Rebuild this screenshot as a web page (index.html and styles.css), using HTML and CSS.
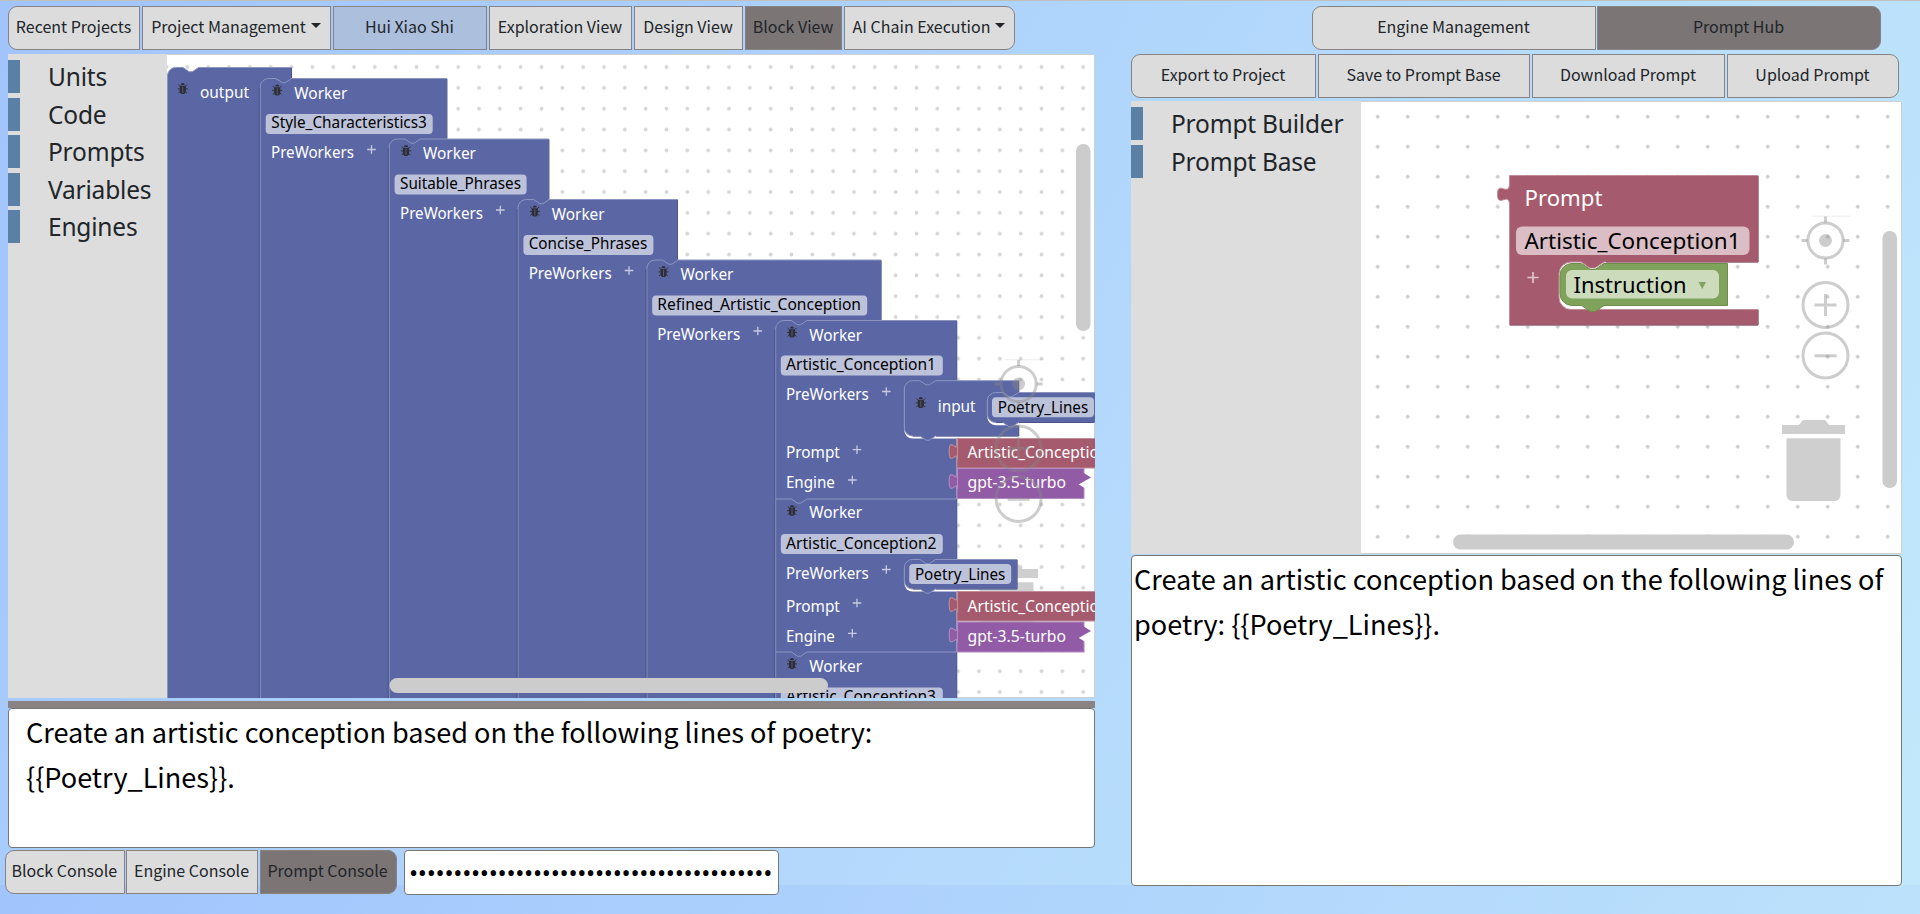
FILE: index.html
```html
<!DOCTYPE html>
<html lang="en">
<head>
<meta charset="utf-8">
<title>Prompt Hub</title>
<link rel="stylesheet" href="styles.css">
</head>
<body>
<svg class="defs" width="0" height="0" aria-hidden="true">
  <defs>
    <pattern id="dots" width="20.833" height="20.833" patternUnits="userSpaceOnUse" x="156.08" y="56.6">
      <circle cx="10.42" cy="10.42" r="1.9" fill="#d6d6d6"/>
    </pattern>
    <pattern id="crosses" width="30" height="30" patternUnits="userSpaceOnUse" x="1362.7" y="101.7">
      <path d="M13 15h4M15 13v4" stroke="#c6c6c6" stroke-width="1.4"/>
    </pattern>
    <symbol id="bug" viewBox="0 0 10 12" overflow="visible">
      <path d="M3 2.6a2 2 0 0 1 4 0zM1.900 3.200h6.200v5.200a3.100 3.100 0 0 1-6.200 0z" fill="#2f2f33"/>
      <path d="M2 3.400.6 2M8 3.400 9.400 2M2 6.400H0M8 6.400h2M2.200 9 .7 10.600M7.800 9l1.500 1.600" stroke="#2f2f33" fill="none"/>
      <path d="M5 4.200v6.400" stroke="#5b67a5" stroke-width=".7"/>
    </symbol>
    <symbol id="plus" viewBox="0 0 10 10" overflow="visible">
      <path d="M0.700 5h8.600M5 .7v8.600" stroke="#fff" stroke-opacity=".65" stroke-width="1.300"/>
    </symbol>
    <g id="puzzle"><path d="M.5 0v5c0 10-8-8-8 7.500s8-2.500 8 7.500z"/></g>
    <g id="controls" fill="none" stroke="#888" stroke-opacity=".42" stroke-width="3">
      <circle cx="0" cy="0" r="17.600"/>
      <circle cx="0" cy="0" r="6.500" fill="#888" fill-opacity=".42" stroke="none"/>
      <path d="M0-24v6M0 18v6M-24 0h6M18 0h6"/>
      <path d="M-13-24.300h38" stroke-width="1" stroke-opacity=".15"/>
      <circle cx="0" cy="64.500" r="22.500"/>
      <path d="M-11 64.500h22M0 53.500v22"/>
      <circle cx="0" cy="115" r="22.500"/>
      <path d="M-11 115.300h22"/>
    </g>
    <g id="trash" fill="#cfcfcf">
      <path d="M0 5h17l4-5h22l4 5h16v9H0z"/>
      <path d="M4.500 18.300h54v56q0 6.700-6 6.700h-42q-6 0-6-6.700z"/>
    </g>
  </defs>
</svg>

<div class="app">
  <section class="left">
    <nav class="bar tabs">
      <button class="btn first" style="width:132px"><span>Recent Projects</span></button>
      <button class="btn" style="width:189px"><span>Project Management</span><i class="caret"></i></button>
      <button class="btn project" style="width:154px"><span>Hui Xiao Shi</span></button>
      <button class="btn" style="width:143px"><span>Exploration View</span></button>
      <button class="btn" style="width:109px"><span>Design View</span></button>
      <button class="btn on" style="width:97px"><span>Block View</span></button>
      <button class="btn last" style="width:171px"><span>AI Chain Execution</span><i class="caret"></i></button>
    </nav>
    <div class="editor">
      <ul class="toolbox">
        <li>Units</li><li>Code</li><li>Prompts</li><li>Variables</li><li>Engines</li>
      </ul>
      <svg class="canvas" viewBox="167 54 928 644">
        <rect x="167" y="54" width="928" height="644" fill="#fff"/>
        <rect x="167" y="57" width="928" height="641" fill="url(#dots)"/>
        <path d="M167 54.500H1094.500V697.500H167" fill="none" stroke="#cfcfcf"/>
        <use href="#trash" x="975" y="564"/>

        <g class="block blue">
          <path d="M167.500 710V75.800a8.300 8.300 0 0 1 8.300-8.300H183l6.200 4.200h3.100l6.300-4.200H291.500V710"/>
          <path d="M260.300 710V86.800a8.300 8.300 0 0 1 8.300-8.300H276l6.200 4.200h3.100l6.300-4.200H446.800V710"/>
          <path d="M389.200 710V147.300a8.300 8.300 0 0 1 8.300-8.300H404.800l6.200 4.200h3.100l6.300-4.200H548.800V710"/>
          <path d="M518 710V207.800a8.300 8.300 0 0 1 8.300-8.300H533.600l6.200 4.200h3.100l6.300-4.200H677.500V710"/>
          <path d="M646.900 710V268.300a8.300 8.300 0 0 1 8.300-8.300H662.500l6.200 4.200h3.100l6.300-4.200H881V710"/>
          <path d="M775.700 710V328.800a8.300 8.300 0 0 1 8.300-8.300H791.300l6.200 4.200h3.100l6.300-4.200H956.700V710"/>
          <path d="M775.700 652V499H791.300l6.200 4.200h3.100l6.300-4.200H956.700"/>
          <path d="M775.700 710V652H791.300l6.200 4.200h3.100l6.300-4.200H956.700"/>
        </g>
        <path class="shade" d="M291.500 68V78M446.800 79V138.500M548.800 139.500V199M677.500 200V259.500M881 260.500V320M956.700 321V380.500M956.700 499V560M956.700 652V698M259.300 88V698M388.200 148V698M517 209V698M645.900 269V698M774.700 330V698"/>
        <g fill="#fff">
          <path d="M957.500 388h-53.200v42.300a8.300 8.300 0 0 0 8.300 8.300h44.900z"/>
          <path d="M957.500 567h-53.200v16.300a8.300 8.300 0 0 0 8.300 8.300h44.900z"/>
        </g>
        <g class="block blue">
          <path d="M904.300 389a8.300 8.300 0 0 1 8.300-8.300H919.900l6.200 4.200h3.100l6.300-4.200H1018.700V436H935.500l-6.300 4.200h-3.100l-6.200-4.200H912.600a8.300 8.300 0 0 1-8.300-8.300z"/>
          <path d="M904.300 567.800a8.300 8.300 0 0 1 8.300-8.300H919.900l6.200 4.200h3.100l6.300-4.200H1017V589H935.500l-6.300 4.200h-3.100l-6.200-4.200H912.600a8.300 8.300 0 0 1-8.300-8.300z"/>
        </g>
        <path d="M1019.500 400h-32.200v17a8.300 8.300 0 0 0 8.300 8.300h23.900z" fill="#fff"/>
        <path class="block blue" d="M987.300 400.800a8.300 8.300 0 0 1 8.300-8.300H1002.900l6.200 4.200h3.100l6.300-4.200H1100V422.500H1018.500l-6.300 4.200h-3.100l-6.200-4.200H995.600a8.300 8.300 0 0 1-8.300-8.300z"/>
        <path class="shade" d="M936 436H1018.700V426M1018.700 381V392M936 589H1017V560M1019 422.500H1094M913 436H920M913 589H920M996 422.500H1003"/>

        <g class="field">
          <rect x="265.700" y="114" width="167" height="20" rx="4"/>
          <rect x="394.600" y="174.500" width="132" height="20" rx="4"/>
          <rect x="523.400" y="235" width="130" height="20" rx="4"/>
          <rect x="652.200" y="295.500" width="215" height="20" rx="4"/>
          <rect x="780.800" y="355.500" width="162" height="20" rx="4"/>
          <rect x="780.800" y="534" width="162" height="20" rx="4"/>
          <rect x="780.800" y="687.500" width="162" height="20" rx="4"/>
          <rect x="992" y="397.300" width="102" height="20" rx="4"/>
          <rect x="909.200" y="564" width="102" height="20" rx="4"/>
        </g>

        <g class="block red">
          <rect x="957" y="438.500" width="145" height="29.500"/>
          <rect x="957" y="591.500" width="145" height="29.500"/>
          <use href="#puzzle" transform="translate(957 438.500) scale(1.04)"/>
          <use href="#puzzle" transform="translate(957 591.500) scale(1.04)"/>
        </g>
        <g class="block violet">
          <rect x="957" y="468.500" width="127" height="30"/>
          <rect x="957" y="622" width="127" height="30"/>
          <use href="#puzzle" transform="translate(957 468.500) scale(1.04)"/>
          <use href="#puzzle" transform="translate(957 622) scale(1.04)"/>
        </g>
        <path d="M1078.500 484.300l6.500-4v8z M1078.500 637.800l6.500-4v8z" fill="#fff"/>
        <path d="M1083 472.500l8 5-12.500 7z M1083 626l8 5-12.500 7z" fill="#925ba5"/>

        <g class="label">
          <text x="200" y="97.700" textLength="49" lengthAdjust="spacingAndGlyphs">output</text>
          <text x="294.300" y="98.700" textLength="53" lengthAdjust="spacingAndGlyphs">Worker</text>
          <text x="423" y="159.200" textLength="53" lengthAdjust="spacingAndGlyphs">Worker</text>
          <text x="551.700" y="219.700" textLength="53" lengthAdjust="spacingAndGlyphs">Worker</text>
          <text x="680.500" y="280.200" textLength="53" lengthAdjust="spacingAndGlyphs">Worker</text>
          <text x="809.200" y="340.700" textLength="53" lengthAdjust="spacingAndGlyphs">Worker</text>
          <text x="809.200" y="518.400" textLength="53" lengthAdjust="spacingAndGlyphs">Worker</text>
          <text x="809.200" y="672.400" textLength="53" lengthAdjust="spacingAndGlyphs">Worker</text>
          <text x="271" y="158.400" textLength="83" lengthAdjust="spacingAndGlyphs">PreWorkers</text>
          <text x="400" y="218.700" textLength="83" lengthAdjust="spacingAndGlyphs">PreWorkers</text>
          <text x="528.700" y="279.200" textLength="83" lengthAdjust="spacingAndGlyphs">PreWorkers</text>
          <text x="657.200" y="339.700" textLength="83" lengthAdjust="spacingAndGlyphs">PreWorkers</text>
          <text x="785.900" y="400" textLength="83" lengthAdjust="spacingAndGlyphs">PreWorkers</text>
          <text x="785.900" y="578.700" textLength="83" lengthAdjust="spacingAndGlyphs">PreWorkers</text>
          <text x="785.900" y="458.200" textLength="54" lengthAdjust="spacingAndGlyphs">Prompt</text>
          <text x="785.900" y="611.500" textLength="54" lengthAdjust="spacingAndGlyphs">Prompt</text>
          <text x="785.900" y="488.300" textLength="49" lengthAdjust="spacingAndGlyphs">Engine</text>
          <text x="785.900" y="641.800" textLength="49" lengthAdjust="spacingAndGlyphs">Engine</text>
          <text x="937.700" y="411.500" textLength="38" lengthAdjust="spacingAndGlyphs">input</text>
          <text x="967.500" y="458.200" textLength="150" lengthAdjust="spacingAndGlyphs">Artistic_Conception1</text>
          <text x="967.500" y="611.500" textLength="150" lengthAdjust="spacingAndGlyphs">Artistic_Conception2</text>
          <text x="967.500" y="488.300" textLength="98.500" lengthAdjust="spacingAndGlyphs">gpt-3.5-turbo</text>
          <text x="967.500" y="641.800" textLength="98.500" lengthAdjust="spacingAndGlyphs">gpt-3.5-turbo</text>
        </g>
        <g class="label dark">
          <text x="271.300" y="128.400" textLength="155.500" lengthAdjust="spacingAndGlyphs">Style_Characteristics3</text>
          <text x="400" y="189" textLength="121" lengthAdjust="spacingAndGlyphs">Suitable_Phrases</text>
          <text x="528.700" y="249.200" textLength="118.500" lengthAdjust="spacingAndGlyphs">Concise_Phrases</text>
          <text x="657.300" y="309.700" textLength="203.700" lengthAdjust="spacingAndGlyphs">Refined_Artistic_Conception</text>
          <text x="786" y="370.200" textLength="150" lengthAdjust="spacingAndGlyphs">Artistic_Conception1</text>
          <text x="786" y="549" textLength="150.500" lengthAdjust="spacingAndGlyphs">Artistic_Conception2</text>
          <text x="786" y="702.200" textLength="150" lengthAdjust="spacingAndGlyphs">Artistic_Conception3</text>
          <text x="997.700" y="412.700" textLength="90.500" lengthAdjust="spacingAndGlyphs">Poetry_Lines</text>
          <text x="914.900" y="579.700" textLength="90.500" lengthAdjust="spacingAndGlyphs">Poetry_Lines</text>
        </g>
        <g>
          <use href="#bug" x="177.800" y="82.500" width="10" height="12"/>
          <use href="#bug" x="272.200" y="84" width="10" height="12"/>
          <use href="#bug" x="401" y="144.500" width="10" height="12"/>
          <use href="#bug" x="529.800" y="205" width="10" height="12"/>
          <use href="#bug" x="658.500" y="265.500" width="10" height="12"/>
          <use href="#bug" x="787" y="326" width="10" height="12"/>
          <use href="#bug" x="787" y="504.300" width="10" height="12"/>
          <use href="#bug" x="787" y="657.500" width="10" height="12"/>
          <use href="#bug" x="915.800" y="396.500" width="10" height="12"/>
          <use href="#plus" x="366.500" y="144.500" width="10" height="10"/>
          <use href="#plus" x="495.300" y="205" width="10" height="10"/>
          <use href="#plus" x="624" y="265.500" width="10" height="10"/>
          <use href="#plus" x="752.800" y="326" width="10" height="10"/>
          <use href="#plus" x="881.300" y="386.500" width="10" height="10"/>
          <use href="#plus" x="881.300" y="564.500" width="10" height="10"/>
          <use href="#plus" x="852" y="444.700" width="10" height="10"/>
          <use href="#plus" x="847.300" y="475" width="10" height="10"/>
          <use href="#plus" x="852" y="598" width="10" height="10"/>
          <use href="#plus" x="847.300" y="628.300" width="10" height="10"/>
        </g>
        <use href="#controls" x="1018.600" y="384"/>
        <rect x="1076" y="144" width="14.500" height="187" rx="7.200" fill="#ccc"/>
        <rect x="389.500" y="678" width="438.500" height="15" rx="7.500" fill="#ccc"/>
      </svg>
    </div>
    <div class="splitter"></div>
    <div class="console"><p>Create an artistic conception based on the following lines of poetry:<br>{{Poetry_Lines}}.</p></div>
    <div class="bar footer">
      <button class="btn first" style="width:119.500px"><span>Block Console</span></button>
      <button class="btn" style="width:132px"><span>Engine Console</span></button>
      <button class="btn on last" style="width:137px"><span>Prompt Console</span></button>
      <div class="secret">•••••••••••••••••••••••••••••••••••••••••</div>
    </div>
  </section>

  <section class="right">
    <nav class="bar hub">
      <button class="btn first" style="width:284px"><span>Engine Management</span></button>
      <button class="btn on last" style="width:284px"><span>Prompt Hub</span></button>
    </nav>
    <nav class="bar actions">
      <button class="btn first" style="width:185px"><span>Export to Project</span></button>
      <button class="btn" style="width:212px"><span>Save to Prompt Base</span></button>
      <button class="btn" style="width:193px"><span>Download Prompt</span></button>
      <button class="btn last" style="width:172px"><span>Upload Prompt</span></button>
    </nav>
    <div class="editor">
      <ul class="toolbox">
        <li>Prompt Builder</li><li>Prompt Base</li>
      </ul>
      <svg class="canvas" viewBox="1361 101 541 453">
        <rect x="1361" y="101" width="541" height="453" fill="#fff"/>
        <rect x="1362" y="103" width="539" height="449" fill="url(#crosses)"/>
        <path d="M1361 101.500H1901.500V553.500H1361" fill="none" stroke="#cfcfcf"/>
        <path class="block red" d="M1509.500 175.500H1758V262H1604l-9.200 6h-4.600l-9-6H1571a12 12 0 0 0-12 12v23.500a12 12 0 0 0 12 12H1758V325H1509.500V205.500c0-15-12 3.500-12-11.200s12 3.700 12-11.300z"/>
        <path d="M1510 325H1758V310M1758 176V262H1606" fill="none" stroke="#84495a"/>
        <path class="block green" d="M1560 275.500a12 12 0 0 1 12-12H1581.500l9 6h4.500l9-6H1727.500V305.500H1604l-9 6h-4.500l-9-6H1572a12 12 0 0 1-12-12z"/>
        <rect x="1516" y="226.500" width="233.500" height="28.500" rx="6" fill="#dbbdc5"/>
        <rect x="1566" y="270" width="153" height="28.500" rx="6" fill="#cddbbd"/>
        <g class="label large">
          <text x="1524.500" y="205.800" textLength="78" lengthAdjust="spacingAndGlyphs">Prompt</text>
          <text class="ink" x="1524.500" y="248.700" textLength="216" lengthAdjust="spacingAndGlyphs">Artistic_Conception1</text>
          <text class="ink" x="1573.500" y="292.700" textLength="113" lengthAdjust="spacingAndGlyphs">Instruction</text>
        </g>
        <path d="M1698.500 282h7.500l-3.750 7z" fill="#80a35b"/>
        <use href="#plus" x="1526.500" y="271" width="13" height="13"/>
        <use href="#controls" x="1825.500" y="240.500"/>
        <use href="#trash" x="1782" y="420"/>
        <rect x="1882.500" y="231" width="14.500" height="257" rx="7.200" fill="#ccc"/>
        <rect x="1453" y="534.500" width="341" height="15" rx="7.500" fill="#ccc"/>
      </svg>
    </div>
    <div class="console"><p>Create an artistic conception based on the following lines of<br>poetry: {{Poetry_Lines}}.</p></div>
  </section>
</div>
</body>
</html>
```
FILE: styles.css
```css
* { box-sizing: border-box; }

html {
  background: linear-gradient(120deg, #a1c4fd 0%, #c2e9fb 100%) 0 0 / 100% 885px;
}

body {
  margin: 0;
  font-family: "Noto Sans CJK SC", "Noto Sans", sans-serif;
  color: #212529;
}

.defs { position: absolute; }

.app {
  display: flex;
  height: 914px;
  border-top: 1px solid #c0c0c0;
}

.left { width: 1095px; padding: 5px 0 0 8px; }
.right { width: 771px; margin-left: 36px; padding-top: 5px; }

.bar { display: flex; height: 44px; gap: 2px; }

.btn {
  display: flex;
  flex: none;
  align-items: center;
  justify-content: center;
  gap: 5px;
  height: 44px;
  padding: 0 1px 5px 0;
  border: 1px solid #888383;
  background: #dcdcdc;
  color: #212529;
  font: 16px/24px "Noto Sans CJK SC", "Noto Sans", sans-serif;
  white-space: nowrap;
}

.first { border-radius: 9px 0 0 9px; }
.last { border-radius: 0 9px 9px 0; }
.on { background: #7b7575; }
.project { background: #acbfdd; }

.caret {
  border: 5px solid transparent;
  border-top-color: #212529;
  border-bottom: 0;
}

.hub { margin-left: 181px; gap: 1px; }
.actions { margin-top: 4px; }

.editor { display: flex; margin-top: 4px; }
.left .editor { height: 644px; }
.right .editor { margin-top: 3px; height: 453px; }

.canvas { display: block; flex: 1; min-width: 0; height: 100%; }

.toolbox {
  width: 159px;
  margin: 0;
  padding: 6px 0 0;
  list-style: none;
  background: #ddd;
}
.right .toolbox { width: 230px; }

.toolbox li {
  height: 33px;
  margin-bottom: 4.500px;
  padding-left: 28px;
  border-left: 12px solid #5b80a5;
  font: 24.500px/33px "Noto Sans", sans-serif;
  letter-spacing: -.2px;
  white-space: nowrap;
}

.splitter { height: 7px; margin-top: 3px; background: #8b8284; }

.console {
  border: 1px solid #767676;
  border-radius: 4px;
  background: #fff;
  color: #000;
  font-size: 27.100px;
  line-height: 45px;
  white-space: nowrap;
}
.console p { margin: 0; }
.left .console { height: 140px; padding: 0 17px; }
.right .console { height: 331px; margin-top: 1px; padding: 0 2px; }

.footer { margin: 2px 0 0 -3px; height: 45px; gap: 1.500px; }

.secret {
  width: 375px;
  height: 45px;
  margin-left: 6px;
  padding-left: 4px;
  border: 1px solid #767676;
  border-radius: 4px;
  background: #fff;
  color: #000;
  overflow: hidden;
  font: 24.300px/43px "Noto Sans", sans-serif;
  letter-spacing: -.28px;
}

.block { stroke-width: 1; }
.blue { fill: #5b67a5; stroke: #8c95c0; }
.red { fill: #a55b6d; stroke: #c08c99; }
.violet { fill: #925ba5; stroke: #b38cc0; }
.green { fill: #80a35b; stroke: #6d8d4c; }
.shade { fill: none; stroke: #4a5488; }
.field { fill: #bdc2db; }

.label { font: 15.600px "Noto Sans", sans-serif; fill: #fff; }
.dark, .ink { fill: #000; }
.large { font-size: 22.500px; }
```
